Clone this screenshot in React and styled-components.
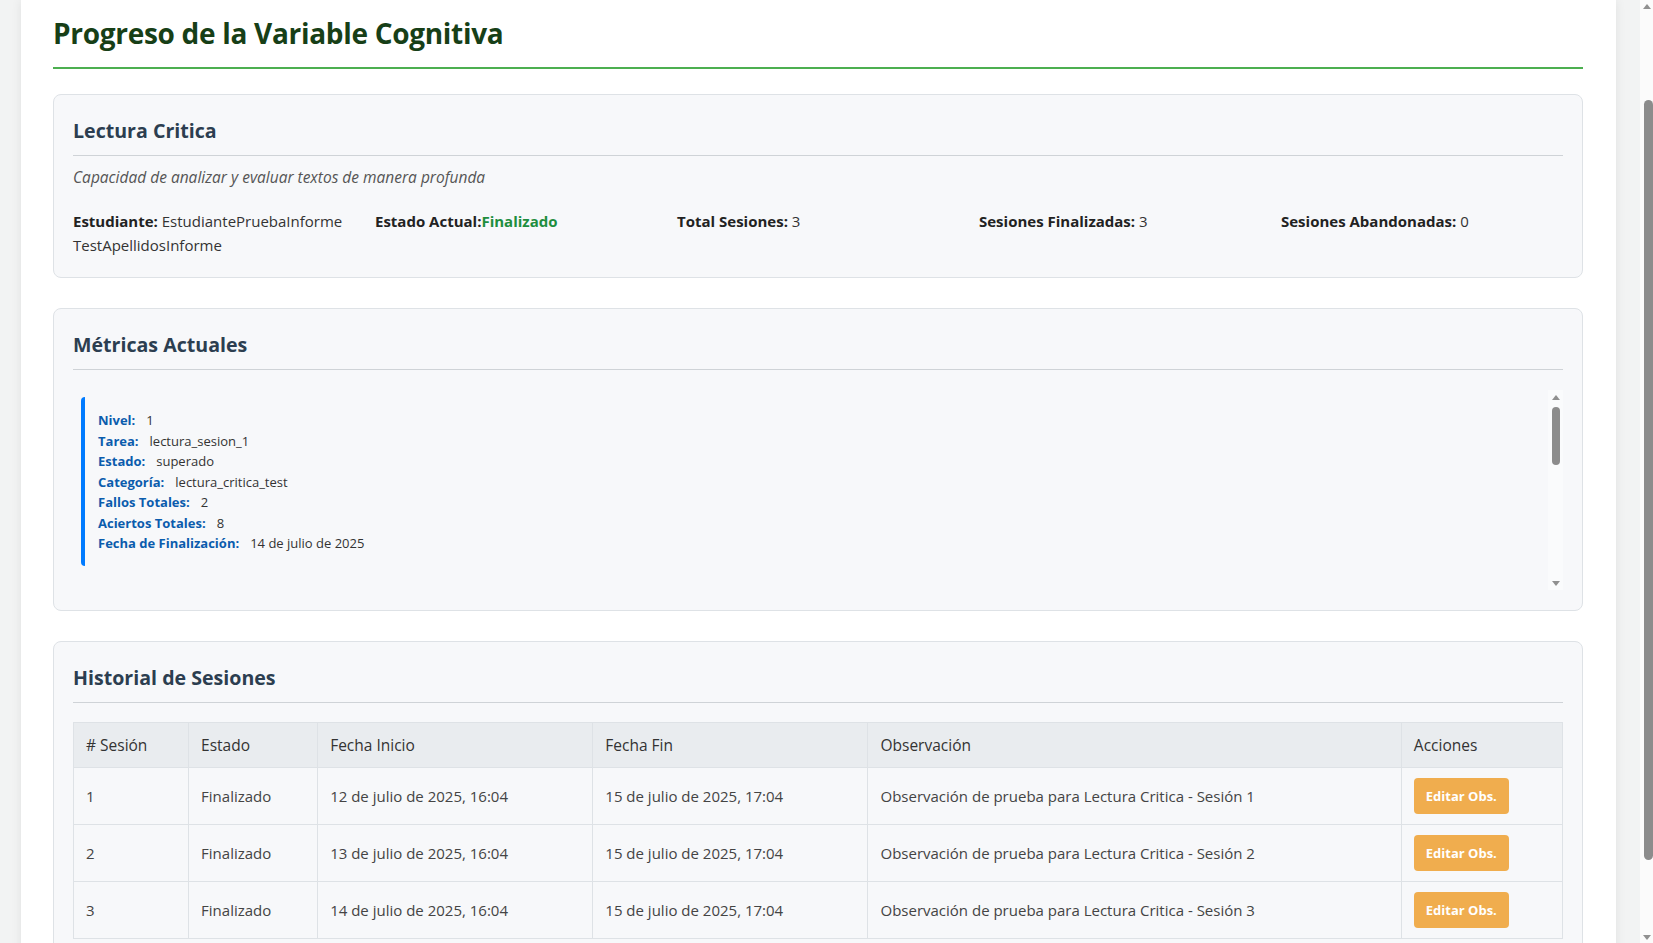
import React from "react";
import styled, { createGlobalStyle } from "styled-components";

const GlobalStyle = createGlobalStyle`
  body {
    margin: 0;
    font-family: "Open Sans", "Noto Sans", sans-serif;
    color: #333;
  }
`;

const Screen = styled.div`
  display: flex;
  height: 100vh;
  overflow: hidden;
`;

const PageArea = styled.div`
  flex: 1;
  min-width: 0;
  overflow: hidden;
  background: #f2f3f3;
`;

const Main = styled.main`
  margin: 0 24px 0 21px;
  padding: 13px 33px 32px 32px;
  background: #fff;
  box-shadow: 0 0 10px rgba(0, 0, 0, 0.08);
`;

const Rail = styled.div`
  flex: 0 0 ${(p) => p.$width}px;
  display: flex;
  flex-direction: column;
  background: ${(p) => p.$bg};
`;

const RailArrow = styled.div`
  flex: 0 0 ${(p) => p.$size}px;
  display: flex;
  align-items: center;
  justify-content: center;

  svg {
    display: block;
  }
`;

const RailTrack = styled.div`
  flex: 1;
  display: flex;
  flex-direction: column;
  align-items: ${(p) => p.$align};
`;

const RailThumb = styled.div`
  width: ${(p) => p.$width}px;
  background: #8c8c8c;
  border-radius: 5px;
`;

const Triangle = ({ down }) => (
  <svg width="8" height="5" viewBox="0 0 8 5">
    <path d={down ? "M0 0H8L4 5z" : "M4 0L8 5H0z"} fill="#909090" />
  </svg>
);

const Scrollbar = ({ width, bg, arrow, thumbWidth, align, top, size }) => (
  <Rail $width={width} $bg={bg}>
    <RailArrow $size={arrow}>
      <Triangle />
    </RailArrow>
    <RailTrack $align={align}>
      <RailThumb $width={thumbWidth} style={{ marginTop: top, height: size }} />
    </RailTrack>
    <RailArrow $size={arrow}>
      <Triangle down />
    </RailArrow>
  </Rail>
);

const PageTitle = styled.h1`
  margin: 0 0 25px;
  padding-bottom: 14px;
  border-bottom: 2px solid #4caf50;
  font-size: 28px;
  line-height: 40px;
  letter-spacing: -0.3px;
  font-weight: 700;
  color: #173f17;
`;

const Card = styled.section`
  background: #f7f8fa;
  border: 1px solid #dee2e6;
  border-radius: 8px;
  padding: 20px 19px;
  margin-bottom: 30px;
`;

const CardTitle = styled.h3`
  margin: 0;
  padding-bottom: 8px;
  border-bottom: 1px solid #cfd3d7;
  font-size: 19.6px;
  line-height: 32px;
  font-weight: 700;
  color: #2c3e50;
`;

const Description = styled.p`
  margin: 10px 0 21px;
  font-size: 15.5px;
  line-height: 22px;
  font-style: italic;
  color: #555;
`;

const StatsGrid = styled.div`
  display: grid;
  grid-template-columns: repeat(5, 1fr);
  gap: 20px;
`;

const Stat = styled.div`
  font-size: 15px;
  line-height: 24px;
  color: #333;

  strong {
    font-weight: 700;
    color: #222;
  }
`;

const StatusText = styled.span`
  color: #1e8e3e;
  font-weight: 700;
`;

const MetricsBox = styled.div`
  display: flex;
  margin-top: 20px;
  height: 200px;
`;

const MetricsContent = styled.div`
  flex: 1;
  overflow: hidden;
  padding: 7px 8px;
`;

const MetricItem = styled.div`
  border-left: 4px solid #007bff;
  border-radius: 4px;
  padding: 13px 13px 12px;
`;

const MetricRow = styled.div`
  font-size: 13px;
  line-height: 20.5px;
  color: #333;
`;

const MetricLabel = styled.span`
  font-weight: 700;
  color: #0b5cad;
  margin-right: 11px;
`;

const Table = styled.table`
  margin-top: 19px;
  width: 100%;
  border-collapse: collapse;
  table-layout: fixed;
`;

const HeadCell = styled.th`
  background: #e9ecef;
  border: 1px solid #dee2e6;
  padding: 12px;
  font-size: 15.5px;
  line-height: 20px;
  text-align: left;
  font-weight: 500;
  color: #333;
`;

const Cell = styled.td`
  border: 1px solid #dee2e6;
  padding: 10px 12px;
  font-size: 15px;
  line-height: 21px;
  color: #444;
`;

const EditButton = styled.button`
  display: block;
  height: 36px;
  padding: 0 12px;
  border: none;
  border-radius: 4px;
  background: #f0ad4e;
  color: #fff;
  font-family: inherit;
  font-size: 13px;
  font-weight: 700;
  cursor: pointer;
`;

const student = {
  name: "EstudiantePruebaInforme TestApellidosInforme",
  status: "Finalizado",
  total: 3,
  done: 3,
  abandoned: 0,
};

const metric = {
  Nivel: "1",
  Tarea: "lectura_sesion_1",
  Estado: "superado",
  "Categoría": "lectura_critica_test",
  "Fallos Totales": "2",
  "Aciertos Totales": "8",
  "Fecha de Finalización": "14 de julio de 2025",
};

const sessions = [1, 2, 3].map((n) => ({
  id: n,
  status: "Finalizado",
  start: `${11 + n} de julio de 2025, 16:04`,
  end: "15 de julio de 2025, 17:04",
  note: `Observación de prueba para Lectura Critica - Sesión ${n}`,
}));

const columns = [
  ["# Sesión", 115],
  ["Estado", 129],
  ["Fecha Inicio", 275],
  ["Fecha Fin", 275],
  ["Observación", 533],
  ["Acciones", 161],
];

export default function App() {
  return (
    <>
      <GlobalStyle />
      <Screen>
        <PageArea>
          <Main>
            <PageTitle>Progreso de la Variable Cognitiva</PageTitle>

            <Card>
              <CardTitle>Lectura Critica</CardTitle>
              <Description>Capacidad de analizar y evaluar textos de manera profunda</Description>
              <StatsGrid>
                <Stat>
                  <strong>Estudiante:</strong> {student.name}
                </Stat>
                <Stat>
                  <strong>Estado Actual:</strong>
                  <StatusText>{student.status}</StatusText>
                </Stat>
                <Stat>
                  <strong>Total Sesiones:</strong> {student.total}
                </Stat>
                <Stat>
                  <strong>Sesiones Finalizadas:</strong> {student.done}
                </Stat>
                <Stat>
                  <strong>Sesiones Abandonadas:</strong> {student.abandoned}
                </Stat>
              </StatsGrid>
            </Card>

            <Card>
              <CardTitle>Métricas Actuales</CardTitle>
              <MetricsBox>
                <MetricsContent>
                  <MetricItem>
                    {Object.entries(metric).map(([label, value]) => (
                      <MetricRow key={label}>
                        <MetricLabel>{label}:</MetricLabel>
                        {value}
                      </MetricRow>
                    ))}
                  </MetricItem>
                </MetricsContent>
                <Scrollbar
                  width={15}
                  bg="#fafbfc"
                  arrow={14}
                  thumbWidth={8}
                  align="center"
                  top={3}
                  size={58}
                />
              </MetricsBox>
            </Card>

            <Card>
              <CardTitle>Historial de Sesiones</CardTitle>
              <Table>
                <colgroup>
                  {columns.map(([name, w]) => (
                    <col key={name} style={{ width: w }} />
                  ))}
                </colgroup>
                <thead>
                  <tr>
                    {columns.map(([name]) => (
                      <HeadCell key={name}>{name}</HeadCell>
                    ))}
                  </tr>
                </thead>
                <tbody>
                  {sessions.map((s) => (
                    <tr key={s.id}>
                      <Cell>{s.id}</Cell>
                      <Cell>{s.status}</Cell>
                      <Cell>{s.start}</Cell>
                      <Cell>{s.end}</Cell>
                      <Cell>{s.note}</Cell>
                      <Cell>
                        <EditButton>Editar Obs.</EditButton>
                      </Cell>
                    </tr>
                  ))}
                </tbody>
              </Table>
            </Card>
          </Main>
        </PageArea>
        <Scrollbar
          width={13}
          bg="#fbfbfb"
          arrow={12}
          thumbWidth={9}
          align="flex-end"
          top={88}
          size={760}
        />
      </Screen>
    </>
  );
}
